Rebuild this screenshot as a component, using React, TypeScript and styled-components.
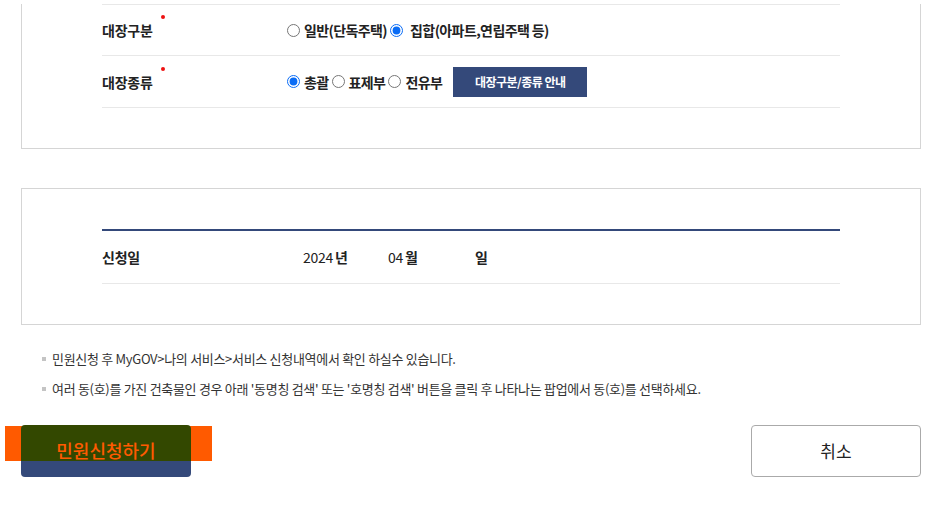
import styled, { createGlobalStyle } from "styled-components";

const GlobalStyle = createGlobalStyle`
  html, body {
    margin: 0;
    padding: 0;
    background: #fff;
  }
  body {
    font-family: "Noto Sans CJK KR", "Noto Sans", sans-serif;
    color: #222;
  }
`;

const Page = styled.div`
  width: 940px;
  padding-top: 4px;
  box-sizing: border-box;
`;

const Panel = styled.section<{ $cut?: boolean }>`
  margin: ${(p) => (p.$cut ? "0" : "39px")} 19px 0 21px;
  border: 1px solid #d5d5d5;
  border-top: ${(p) => (p.$cut ? "none" : "1px solid #d5d5d5")};
  padding: ${(p) => (p.$cut ? "0" : "40px")} 80px 40px 80px;
`;

const Table = styled.div<{ $head?: boolean }>`
  border-top: ${(p) => (p.$head ? "2px solid #34497a" : "1px solid #e8e8e8")};
`;

const Row = styled.div<{ $h: number }>`
  display: grid;
  grid-template-columns: 185px 1fr;
  align-items: center;
  height: ${(p) => p.$h}px;
  border-bottom: 1px solid #e8e8e8;
`;

const Label = styled.div<{ $required?: boolean }>`
  position: relative;
  font-size: 14px;
  line-height: 20px;
  font-weight: 700;
  letter-spacing: -0.2px;
  color: #222;

  &::after {
    content: "";
    display: ${(p) => (p.$required ? "block" : "none")};
    position: absolute;
    left: 59px;
    top: -5px;
    width: 4px;
    height: 4px;
    border-radius: 50%;
    background: #ee1111;
  }
`;

const Options = styled.div`
  display: flex;
  align-items: center;
  font-size: 14px;
  font-weight: 700;
  letter-spacing: -0.6px;
  color: #222;
`;

const Option = styled.label<{ $wide?: boolean }>`
  display: flex;
  align-items: center;
  gap: ${(p) => (p.$wide ? "7px" : "4px")};
  margin-right: 3px;
  white-space: nowrap;
`;

const Radio = styled.input`
  width: 13px;
  height: 13px;
  margin: 0;
  accent-color: #0a6cf5;
`;

const GuideButton = styled.button`
  margin-left: 8px;
  width: 134px;
  height: 30px;
  border: none;
  background: #34497a;
  color: #fff;
  font-family: inherit;
  font-size: 12px;
  font-weight: 700;
  letter-spacing: -0.5px;
  cursor: pointer;
`;

const DateValue = styled.div`
  display: flex;
  align-items: center;
  padding-left: 16px;
  font-size: 14px;
  line-height: 20px;
  color: #222;
`;

const DatePart = styled.span<{ $w: number }>`
  width: ${(p) => p.$w}px;
  display: flex;
  gap: 2px;
  letter-spacing: -0.3px;

  b {
    font-weight: 700;
  }
`;

const Notes = styled.ul`
  list-style: none;
  margin: 19px 0 0 0;
  padding: 0 0 0 42px;
`;

const Note = styled.li`
  position: relative;
  padding-left: 10px;
  line-height: 30px;
  font-size: 13px;
  letter-spacing: -0.3px;
  color: #333;

  &::before {
    content: "";
    position: absolute;
    left: 0;
    top: 13px;
    width: 4px;
    height: 4px;
    background: #c4c4c4;
  }
`;

const Buttons = styled.div`
  display: flex;
  justify-content: space-between;
  margin: 21px 19px 0 21px;
`;

const SubmitWrap = styled.div`
  position: relative;
  width: 170px;
  height: 52px;
`;

const Highlight = styled.span`
  position: absolute;
  left: -16px;
  top: 1px;
  width: 207px;
  height: 35px;
  background: #ff5a00;
`;

const SubmitButton = styled.button`
  position: relative;
  width: 170px;
  height: 52px;
  border: none;
  border-radius: 4px;
  background: linear-gradient(#334800 0, #334800 36px, #34497a 36px);
  color: #ff5a00;
  font-family: inherit;
  font-size: 18px;
  font-weight: 500;
  letter-spacing: 0;
  padding: 0 0 2px;
  cursor: pointer;
`;

const CancelButton = styled.button`
  width: 170px;
  height: 52px;
  border: 1px solid #aaa;
  border-radius: 4px;
  background: #fff;
  color: #222;
  font-family: inherit;
  font-size: 17px;
  padding: 0 0 2px;
  cursor: pointer;
`;

export default function App() {
  return (
    <Page>
      <GlobalStyle />
      <Panel $cut>
        <Table>
          <Row $h={50}>
            <Label $required>대장구분</Label>
            <Options>
              <Option>
                <Radio type="radio" name="kind" />
                일반(단독주택)
              </Option>
              <Option $wide>
                <Radio type="radio" name="kind" defaultChecked />
                집합(아파트,연립주택 등)
              </Option>
            </Options>
          </Row>
          <Row $h={51}>
            <Label $required>대장종류</Label>
            <Options>
              <Option>
                <Radio type="radio" name="type" defaultChecked />
                총괄
              </Option>
              <Option>
                <Radio type="radio" name="type" />
                표제부
              </Option>
              <Option>
                <Radio type="radio" name="type" />
                전유부
              </Option>
              <GuideButton>대장구분/종류 안내</GuideButton>
            </Options>
          </Row>
        </Table>
      </Panel>

      <Panel>
        <Table $head>
          <Row $h={52}>
            <Label>신청일</Label>
            <DateValue>
              <DatePart $w={85}>
                2024<b>년</b>
              </DatePart>
              <DatePart $w={87}>
                04<b>월</b>
              </DatePart>
              <DatePart $w={40}>
                <b>일</b>
              </DatePart>
            </DateValue>
          </Row>
        </Table>
      </Panel>

      <Notes>
        <Note>민원신청 후 MyGOV&gt;나의 서비스&gt;서비스 신청내역에서 확인 하실수 있습니다.</Note>
        <Note>
          여러 동(호)를 가진 건축물인 경우 아래 '동명칭 검색' 또는 '호명칭 검색' 버튼을 클릭 후 나타나는 팝업에서 동(호)를 선택하세요.
        </Note>
      </Notes>

      <Buttons>
        <SubmitWrap>
          <Highlight />
          <SubmitButton>민원신청하기</SubmitButton>
        </SubmitWrap>
        <CancelButton>취소</CancelButton>
      </Buttons>
    </Page>
  );
}
